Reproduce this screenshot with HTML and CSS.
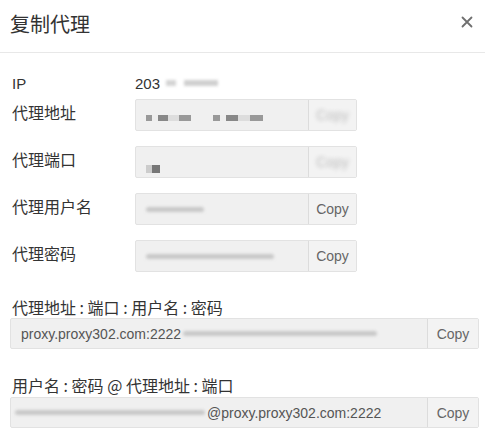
FILE: index.html
```html
<!DOCTYPE html>
<html lang="zh-CN">
<head>
    <meta charset="UTF-8">
    <meta name="viewport" content="width=device-width, initial-scale=1.0">
    <title>复制代理</title>
    <link rel="stylesheet" href="styles.css">
</head>
<body>

<div class="modal">
    <div class="modal-header">
        <h2>复制代理</h2>
        <button class="close-btn">
            <svg width="12" height="12" viewBox="0 0 12 12"><path d="M1.5 1.5l9 9M10.5 1.5l-9 9" stroke="#6f6f6f" stroke-width="1.8" stroke-linecap="round"/></svg>
        </button>
    </div>

    <div class="modal-body">
        <div class="row row-ip">
            <span class="label">IP</span>
            <span class="ip-value">203 <span class="blur blur-ip1"></span><span class="blur blur-ip2"></span></span>
        </div>
        <div class="row">
            <span class="label">代理地址</span>
            <div class="group">
                <div class="field"><span class="blur dots"></span><span class="blur dots dots2"></span></div>
                <button class="copy copy-hidden">Copy</button>
            </div>
        </div>
        <div class="row">
            <span class="label">代理端口</span>
            <div class="group">
                <div class="field"><span class="blur dots dots3"></span></div>
                <button class="copy copy-hidden">Copy</button>
            </div>
        </div>
        <div class="row">
            <span class="label">代理用户名</span>
            <div class="group">
                <div class="field"><span class="blur smear smear-user"></span></div>
                <button class="copy">Copy</button>
            </div>
        </div>
        <div class="row">
            <span class="label">代理密码</span>
            <div class="group">
                <div class="field"><span class="blur smear smear-pass"></span></div>
                <button class="copy">Copy</button>
            </div>
        </div>

        <div class="full full-first">
            <div class="full-label">代理地址 : 端口 : 用户名 : 密码</div>
            <div class="group group-wide">
                <div class="field">proxy.proxy302.com:2222<span class="blur smear smear-tail"></span></div>
                <button class="copy copy-wide">Copy</button>
            </div>
        </div>
        <div class="full full-second">
            <div class="full-label">用户名 : 密码 @ 代理地址 : 端口</div>
            <div class="group group-wide">
                <div class="field field-end"><span class="blur smear smear-head"></span>@proxy.proxy302.com:2222</div>
                <button class="copy copy-wide">Copy</button>
            </div>
        </div>
    </div>
</div>

</body>
</html>
```
FILE: styles.css
```css
body {
    margin: 0;
    background-color: #fff;
    font-family: "Liberation Sans", "Noto Sans CJK SC", sans-serif;
    color: #333;
}
.modal-header {
    display: flex;
    justify-content: space-between;
    align-items: center;
    height: 52px;
    padding: 0 12px 0 10px;
    border-bottom: 1px solid #e8e8e8;
}
.modal-header h2 {
    margin: 0;
    font-size: 20px;
    font-weight: normal;
    color: #333;
    font-family: "Noto Sans CJK SC", sans-serif;
    margin-top: -6px;
}
.close-btn {
    background: transparent;
    border: none;
    padding: 0;
    margin-top: -8px;
    display: flex;
}
.modal-body {
    padding: 18px 6px 0 10px;
}
.row {
    display: flex;
    align-items: center;
    height: 32px;
    margin-bottom: 15px;
}
.row-ip {
    height: 24px;
    margin-bottom: 4px;
}
.label {
    width: 123px;
    padding-left: 2px;
    font-size: 16px;
    font-family: "Noto Sans CJK SC", sans-serif;
    color: #333;
    margin-top: -6px;
}
.row-ip .label {
    font-family: "Liberation Sans", sans-serif;
    font-size: 15px;
    margin-top: 0;
}
.ip-value {
    font-size: 15px;
    color: #333;
    display: flex;
    align-items: center;
}
.group {
    display: flex;
    width: 222px;
    height: 32px;
    border: 1px solid #e2e2e2;
    border-radius: 2px;
    background-color: #f0f0f0;
    box-sizing: border-box;
}
.field {
    flex: 1;
    display: flex;
    align-items: center;
    padding-left: 10px;
    font-size: 14px;
    color: #555;
    overflow: hidden;
    white-space: nowrap;
}
.copy {
    width: 48px;
    border: none;
    border-left: 1px solid #dcdcdc;
    background-color: #f3f3f3;
    color: #666;
    font-size: 14px;
    font-family: "Liberation Sans", sans-serif;
    padding: 0;
}
.copy-hidden {
    color: transparent;
    text-shadow: 0 0 4px #bbb;
}
.blur {
    display: inline-block;
    background-color: #c4c4c4;
    filter: blur(1.5px);
}
.blur-ip1 {
    width: 10px;
    height: 6px;
    margin-left: 6px;
    background-color: #d4d4d4;
}
.blur-ip2 {
    width: 34px;
    height: 6px;
    margin-left: 8px;
    background-color: #d0d0d0;
}
.dots {
    width: 45px;
    height: 6px;
    margin-top: 6px;
    background: linear-gradient(90deg, #999 0 14%, #eee 14% 26%, #888 26% 50%, #ddd 50% 74%, #999 74%);
    filter: blur(0.6px);
}
.dots2 {
    width: 50px;
    margin-left: 22px;
}
.dots3 {
    width: 14px;
    height: 8px;
    margin-top: 14px;
    background: linear-gradient(90deg, #ccc 0 45%, #777 45%);
}
.smear {
    height: 5px;
    border-radius: 3px;
    background-color: #c8c8c8;
}
.smear-user {
    width: 58px;
}
.smear-pass {
    width: 128px;
}
.full-first {
    margin-top: 26px;
}
.full-second {
    margin-top: 27px;
}
.full-label {
    font-size: 16px;
    line-height: 18px;
    font-family: "Noto Sans CJK SC", sans-serif;
    padding-left: 2px;
    margin-bottom: 2px;
}
.full-second .full-label {
    margin-bottom: 3px;
}
.group-wide {
    width: 469px;
    height: 31px;
}
.copy-wide {
    width: 51px;
}
.smear-tail {
    width: 194px;
    margin-left: 2px;
}
.smear-head {
    width: 190px;
    margin-right: 2px;
}
.field-end {
    padding-left: 4px;
}
```
